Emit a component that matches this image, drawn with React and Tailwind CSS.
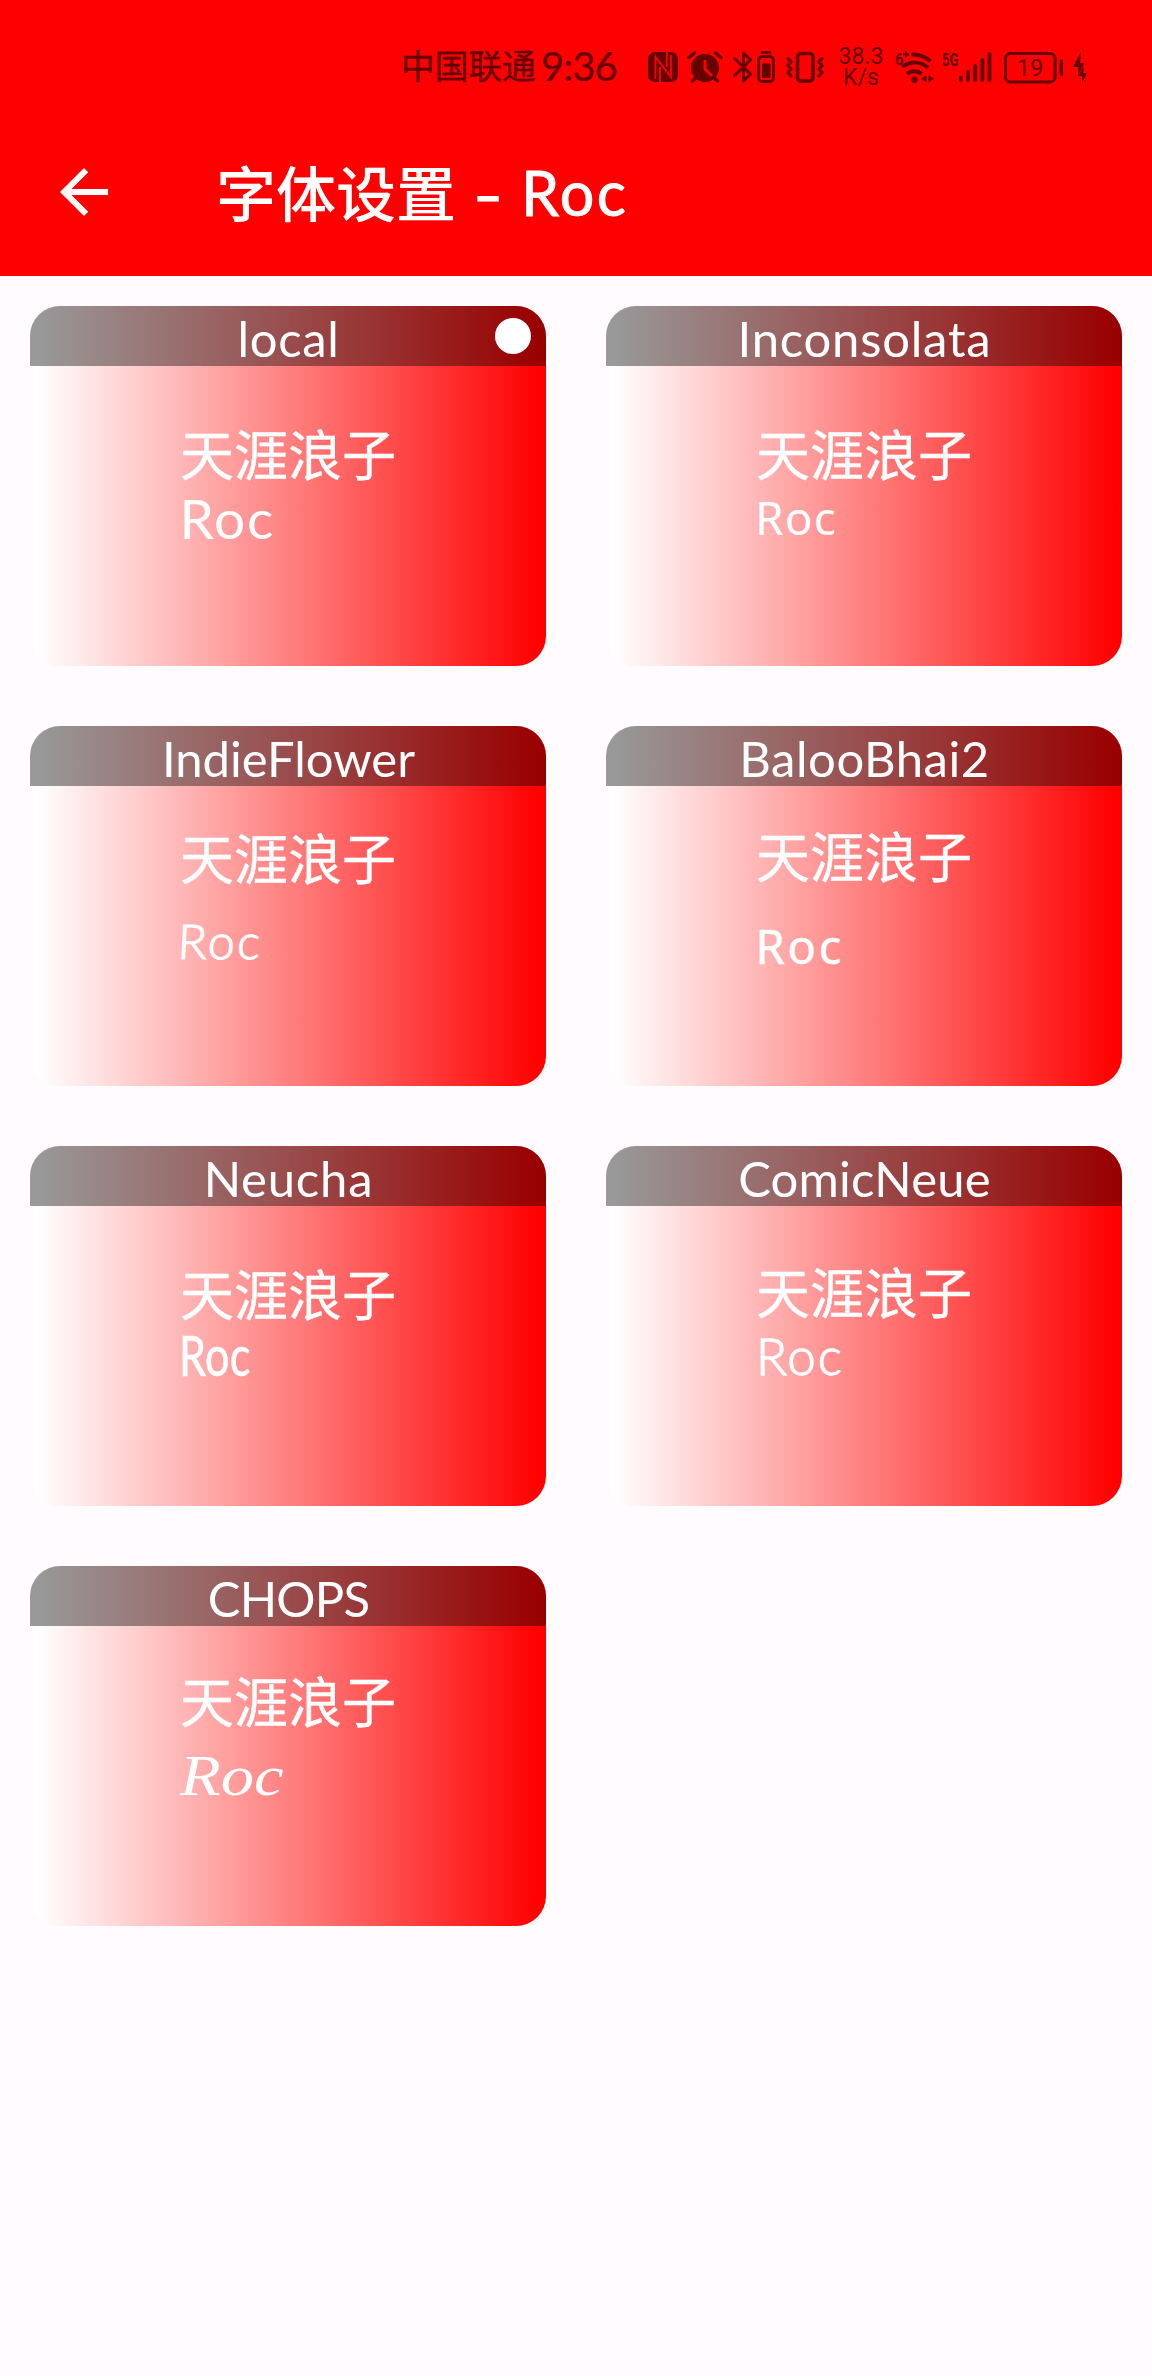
import React from 'react';

const samples = [
  { name: 'local', selected: true, title: 'tracking-[0.7px]', top: 'pt-[60px]', roc: 'mt-[8px] ml-[-0.5px] text-[55px] tracking-[1.8px]' },
  { name: 'Inconsolata', title: 'tracking-[0.77px]', top: 'pt-[60px]', roc: 'mt-[7px] ml-[-1px] text-[46px] tracking-[1.2px] font-["Noto_Sans",sans-serif]' },
  { name: 'IndieFlower', title: 'tracking-[0px]', top: 'pt-[44px]', roc: 'mt-[27px] ml-[-2px] text-[48px] font-light tracking-[2.5px] -skew-x-3 [-webkit-text-stroke:1.2px_white]' },
  { name: 'BalooBhai2', title: 'tracking-[0.55px]', top: 'pt-[42px]', roc: 'mt-[34px] ml-[-0.5px] text-[47px] tracking-[2.8px] font-["Noto_Sans",sans-serif] [-webkit-text-stroke:0.5px_white]' },
  { name: 'Neucha', title: 'tracking-[0.8px]', top: 'pt-[60px]', roc: 'mt-[5px] ml-[-1.5px] text-[56px] tracking-[0.5px] origin-left scale-x-[0.77] [-webkit-text-stroke:0.7px_white]' },
  { name: 'ComicNeue', title: 'tracking-[0.2px]', top: 'pt-[58px]', roc: 'mt-[8px] text-[51px] font-light tracking-[2px] [-webkit-text-stroke:1.3px_white]' },
  { name: 'CHOPS', title: 'tracking-[-0.8px]', top: 'pt-[47px]', roc: 'mt-[19px] text-[57px] italic origin-left scale-x-[1.17] font-["Liberation_Serif",serif]' },
];

function Glyph({ x, w, className = '', children }) {
  return (
    <svg className={`shrink-0 overflow-visible ${className}`} width={w} height="40" viewBox={`${x} 48 ${w} 40`} fill="none" stroke="none">
      {children}
    </svg>
  );
}

function StatusBar() {
  return (
    <div className="flex h-[108px] items-start pl-[401px] pt-[48px] text-[#660000]">
      <span className='-mt-[3px] w-[140px] shrink-0 whitespace-nowrap font-["Noto_Sans_CJK_SC",sans-serif] text-[33.7px] leading-[40px] [-webkit-text-stroke:0.4px_#660000]'>中国联通</span>
      <span className="w-[107px] shrink-0 whitespace-nowrap text-[40px] leading-[37px] tracking-[-1px] [-webkit-text-stroke:0.2px_#660000]">9:36</span>
      {/* NFC */}
      <Glyph x={648} w={30}>
        <rect x="648" y="52" width="30" height="30" rx="7" fill="#660000" />
        <path d="M655.5 79V57L671 77V55" stroke="#f00" strokeWidth="1.8" />
        <path d="M660 82V67M666.800 52v15" stroke="#f00" strokeWidth="1.800" />
      </Glyph>
      {/* Alarm */}
      <Glyph x={688} w={34} className="ml-[10px]">
        <circle cx="705" cy="68" r="14" fill="#660000" />
        <path d="M689 57.500l5.500-4.500M721 57.500l-5.500-4.500M692.500 81l4-4M717.500 81l-4-4" stroke="#660000" strokeWidth="3.400" strokeLinecap="round" />
        <path d="M705 61v8l6 6" stroke="#f00" strokeWidth="3" strokeLinecap="round" strokeLinejoin="round" />
      </Glyph>
      {/* Bluetooth with device battery */}
      <Glyph x={732} w={44} className="ml-[10px]">
        <path d="M734.500 75.500l16-15.500-7-7v28l7-7-16-15.500" stroke="#660000" strokeWidth="3" strokeLinejoin="round" strokeLinecap="round" />
        <rect x="758.500" y="56.500" width="15" height="25" rx="4" stroke="#660000" strokeWidth="3" />
        <path d="M762 52.500h8" stroke="#660000" strokeWidth="2.600" strokeLinecap="round" />
        <rect x="762" y="63.500" width="8.500" height="14.500" rx="1" fill="#660000" />
      </Glyph>
      {/* Vibrate */}
      <Glyph x={786} w={38} className="ml-[10px]">
        <rect x="797.500" y="53.500" width="15.500" height="27.500" rx="3.500" stroke="#660000" strokeWidth="3.600" />
        <path d="M788 58.500l3 3.500-3 3.500 3 3.500-3 3.500 3 3.500M822 58.500l-3 3.500 3 3.500-3 3.500 3 3.500-3 3.500" stroke="#660000" strokeWidth="3.200" strokeLinecap="round" strokeLinejoin="round" />
      </Glyph>
      <div className="ml-[11px] flex w-[52px] shrink-0 flex-col items-center whitespace-nowrap font-[Roboto,sans-serif] text-[23px] leading-[21px]">
        <span className="-mt-[2px]">38.3</span>
        <span>K/s</span>
      </div>
      {/* Wi-Fi 6+ */}
      <Glyph x={895} w={38} className="ml-[8px]">
        <text x="895" y="64.500" fontSize="17" fontWeight="700" fontFamily="Roboto, sans-serif" fill="#660000" textLength="8.500" lengthAdjust="spacingAndGlyphs">6</text>
        <path d="M903 54.500h6M906 51.500v6" stroke="#660000" strokeWidth="1.800" />
        <path d="M911.500 54.300c7.500 0 14 2.500 19 7" stroke="#660000" strokeWidth="4" />
        <path d="M902.500 67c7-6 18.500-6 25.500 1" stroke="#660000" strokeWidth="4" />
        <path d="M907 74c4-3.700 10.500-3.700 14.500 0" stroke="#660000" strokeWidth="4" />
        <circle cx="914.500" cy="79.800" r="3.200" fill="#660000" />
        <path d="M926.500 75v7.500l-5.500-3.700zM928.500 75v7.500l5.500-3.700z" fill="#660000" />
      </Glyph>
      {/* 5G signal */}
      <Glyph x={942} w={50} className="ml-[9px]">
        <text x="942" y="65.500" fontSize="18.500" fontWeight="700" fontFamily="Roboto, sans-serif" fill="#660000" textLength="16.500" lengthAdjust="spacingAndGlyphs">5G</text>
        <path d="M960.700 77.500v2.500M968 72v8M975.200 66v14M982.400 60v20M989.500 54v26" stroke="#660000" strokeWidth="3.800" strokeLinecap="round" />
      </Glyph>
      {/* Battery */}
      <Glyph x={1004} w={60} className="ml-[12px]">
        <rect x="1005.500" y="53.500" width="49.500" height="28.500" rx="5" stroke="#660000" strokeWidth="3" />
        <path d="M1061.300 61v13.500" stroke="#660000" strokeWidth="3.400" strokeLinecap="round" />
        <text x="1030" y="75.800" textAnchor="middle" fontSize="23.500" fontFamily="Roboto, sans-serif" fill="#660000">19</text>
      </Glyph>
      {/* Charging */}
      <Glyph x={1073} w={14} className="ml-[9px]">
        <path d="M1081 51.500l-8 15.500h5v9l6.500-13h-4.500zM1083.500 66l-5 10h3.500v7.500l5-10.500h-3.500z" fill="#660000" />
      </Glyph>
    </div>
  );
}

function FontCard({ sample }) {
  return (
    <div className="relative h-[360px] overflow-hidden rounded-[30px] bg-linear-to-r/srgb from-white from-[1.5%] to-[#ff0000] to-[99%]">
      <div className="h-[60px] bg-black/40 pl-[1px] text-center text-[49px] leading-[65px]">
        <span className={sample.title}>{sample.name}</span>
      </div>
      {sample.selected && <div className="absolute right-[15px] top-[12px] size-9 rounded-full bg-white" />}
      <div className={`mx-auto flex w-[216px] flex-col items-start whitespace-nowrap ${sample.top}`}>
        <span className='font-["Noto_Sans_CJK_SC",sans-serif] text-[54px] leading-[54px] [-webkit-text-stroke:0.4px_white]'>天涯浪子</span>
        <span className={`block leading-[60px] ${sample.roc}`}>Roc</span>
      </div>
    </div>
  );
}

export default function App() {
  return (
    <div className="min-h-[2376px] w-full overflow-hidden bg-[#fffbff] font-[Lato,sans-serif] text-white">
      <header className="h-[276px] bg-[#ff0000]">
        <StatusBar />
        <div className="flex h-[168px] items-center pl-[48px]">
          <svg width="72" height="72" viewBox="0 0 24 24" fill="currentColor">
            <path d="M20 11H7.830l5.590-5.590L12 4l-8 8 8 8 1.410-1.410L7.830 13H20v-2z" />
          </svg>
          <h1 className="ml-[96px] flex whitespace-nowrap leading-[72px]">
            <span className='mt-px font-["Noto_Sans_CJK_SC",sans-serif] text-[60px] font-medium'>字体设置</span>
            <span className="ml-[17px] mt-[4px] w-[48px] origin-left scale-x-[1.35] text-[60px] [-webkit-text-stroke:1px_white]">-</span>
            <span className="mt-[3px] text-[61px] tracking-[2.5px] [-webkit-text-stroke:0.9px_white]">Roc</span>
          </h1>
        </div>
      </header>
      <main className="grid grid-cols-2 gap-[60px] p-[30px]">
        {samples.map((s) => (
          <FontCard key={s.name} sample={s} />
        ))}
      </main>
    </div>
  );
}
